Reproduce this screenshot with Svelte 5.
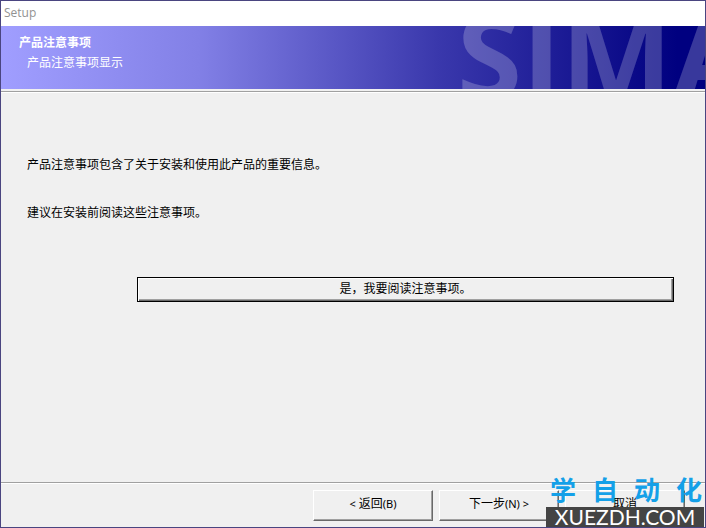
<script lang="ts">
  const title = 'Setup'
  const notes = [
    '产品注意事项包含了关于安装和使用此产品的重要信息。',
    '建议在安装前阅读这些注意事项。'
  ]
  const siteName = ['学', '自', '动', '化']
</script>

<div class="window">
  <div class="titlebar">{title}</div>

  <header class="banner">
    <span class="banner__brand" aria-hidden="true">SIMA</span>
    <h1>产品注意事项</h1>
    <p>产品注意事项显示</p>
  </header>

  <main class="content">
    {#each notes as note}
      <p>{note}</p>
    {/each}
    <button class="read" type="button">是，我要阅读注意事项。</button>
  </main>

  <footer class="actions">
    <button type="button">&lt; <span>返回</span>(B)</button>
    <button type="button"><span>下一步</span>(N) &gt;</button>
    <button type="button"><span>取消</span></button>
  </footer>

  <div class="site">
    <div class="site__name">
      {#each siteName as char}
        <span>{char}</span>
      {/each}
    </div>
    <div class="site__url">XUEZDH.COM</div>
  </div>
</div>

<style>
  :global(body) {
    margin: 0;
    background: #f0f0f0;
  }
  .window {
    position: relative;
    display: flex;
    flex-direction: column;
    box-sizing: border-box;
    min-height: 100vh;
    border: 1px solid #4a4580;
    background: #f0f0f0;
    color: #000;
    font-family: 'Noto Sans', 'Noto Sans CJK SC', sans-serif;
    font-size: 12px;
    line-height: 16px;
    overflow: hidden;
  }
  h1,
  p {
    margin: 0;
    font-size: 12px;
  }
  .titlebar {
    padding: 4px 3px 5px;
    background: #fff;
    color: #929292;
    font-family: 'Open Sans', sans-serif;
  }
  .banner {
    position: relative;
    box-sizing: border-box;
    height: 63px;
    padding: 9px 18px;
    background: linear-gradient(90deg, #a09eff 0%, #8280e6 28%, #3a38ac 62%, #000080 96%);
    color: #fff;
    overflow: hidden;
  }
  .banner p {
    padding: 4px 8px;
  }
  .banner__brand {
    position: absolute;
    top: -30px;
    right: 0;
    width: 248px;
    color: rgba(255, 255, 255, 0.22);
    font-family: 'Open Sans', sans-serif;
    font-size: 118px;
    font-weight: bold;
    line-height: 118px;
    white-space: nowrap;
  }
  .content {
    flex: 1;
    display: flex;
    flex-direction: column;
    gap: 32px;
    padding: 65px 31px 24px 26px;
    border-top: 1px solid #a0a0a0;
    box-shadow: inset 0 1px #fff;
    margin-top: 2px;
  }
  button {
    box-sizing: border-box;
    padding: 0;
    border: 1px solid;
    border-color: #fff #696969 #696969 #fff;
    border-radius: 0;
    background: #f0f0f0;
    box-shadow: inset -1px -1px #a0a0a0;
    color: #000;
    font: inherit;
  }
  .read {
    height: 25px;
    margin: 24px 0 0 110px;
    padding-bottom: 2px;
    border-color: #000;
    box-shadow:
      inset 1px 1px #fff,
      inset -1px -1px #696969,
      inset -2px -2px #a0a0a0;
  }
  .actions {
    display: flex;
    justify-content: flex-end;
    gap: 6px;
    padding: 7px 20px 6px;
    border-top: 1px solid #a0a0a0;
    box-shadow: inset 0 1px #fff;
  }
  .actions button {
    width: 120px;
    height: 31px;
    padding-bottom: 3px;
    font-size: 11px;
  }
  .actions span {
    font-size: 12px;
  }
  .site {
    position: absolute;
    right: 1px;
    bottom: 0;
    width: 158px;
  }
  .site__name {
    display: flex;
    justify-content: space-between;
    padding: 0 2px 2px 4px;
    color: #14a0e8;
    font-family: 'Noto Sans CJK SC', sans-serif;
    font-size: 26px;
    font-weight: 700;
    line-height: 32px;
  }
  .site__url {
    background: #444;
    color: #fff;
    font-family: Lato, sans-serif;
    font-size: 21px;
    line-height: 20px;
    text-align: center;
  }
</style>
